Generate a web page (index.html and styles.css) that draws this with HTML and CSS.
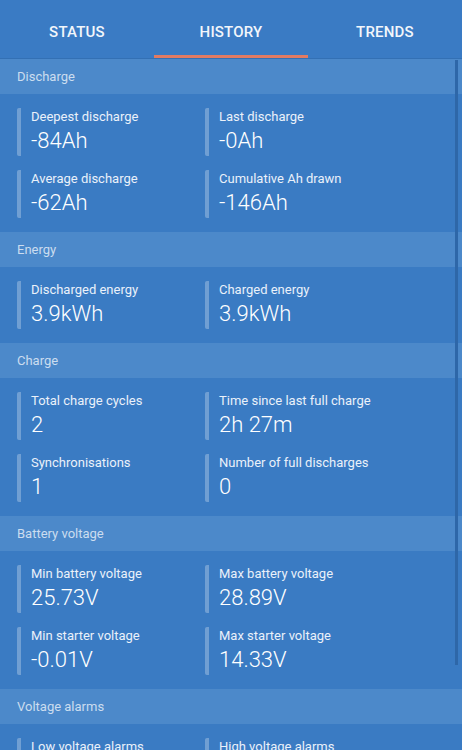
FILE: index.html
```html
<!DOCTYPE html>
<html lang="en">
<head>
  <meta charset="UTF-8" />
  <meta name="viewport" content="width=462, initial-scale=1.0"/>
  <title>History</title>
  <link rel="stylesheet" href="styles.css">
</head>
<body>

  <nav class="tabs">
    <div class="tab">STATUS</div>
    <div class="tab active">HISTORY</div>
    <div class="tab">TRENDS</div>
  </nav>

  <main class="history">

    <div class="section-title">Discharge</div>
    <div class="grid">
      <div class="item"><div class="label">Deepest discharge</div><div class="value">-84Ah</div></div>
      <div class="item"><div class="label">Last discharge</div><div class="value">-0Ah</div></div>
      <div class="item"><div class="label">Average discharge</div><div class="value">-62Ah</div></div>
      <div class="item"><div class="label">Cumulative Ah drawn</div><div class="value">-146Ah</div></div>
    </div>

    <div class="section-title">Energy</div>
    <div class="grid">
      <div class="item"><div class="label">Discharged energy</div><div class="value">3.9kWh</div></div>
      <div class="item"><div class="label">Charged energy</div><div class="value">3.9kWh</div></div>
    </div>

    <div class="section-title">Charge</div>
    <div class="grid">
      <div class="item"><div class="label">Total charge cycles</div><div class="value">2</div></div>
      <div class="item"><div class="label">Time since last full charge</div><div class="value">2h 27m</div></div>
      <div class="item"><div class="label">Synchronisations</div><div class="value">1</div></div>
      <div class="item"><div class="label">Number of full discharges</div><div class="value">0</div></div>
    </div>

    <div class="section-title">Battery voltage</div>
    <div class="grid">
      <div class="item"><div class="label">Min battery voltage</div><div class="value">25.73V</div></div>
      <div class="item"><div class="label">Max battery voltage</div><div class="value">28.89V</div></div>
      <div class="item"><div class="label">Min starter voltage</div><div class="value">-0.01V</div></div>
      <div class="item"><div class="label">Max starter voltage</div><div class="value">14.33V</div></div>
    </div>

    <div class="section-title">Voltage alarms</div>
    <div class="grid">
      <div class="item"><div class="label">Low voltage alarms</div><div class="value">0</div></div>
      <div class="item"><div class="label">High voltage alarms</div><div class="value">0</div></div>
    </div>

  </main>

  <div class="scrollbar"></div>

</body>
</html>
```

FILE: styles.css
```css
body {
  margin: 0;
  font-family: Roboto, "Liberation Sans", sans-serif;
  background: #3a7bc3;
  color: #fff;
  overflow: hidden;
  height: 750px;
  position: relative;
}

.tabs {
  display: grid;
  grid-template-columns: repeat(3, 1fr);
  height: 58px;
  background: #3a7bc4;
  border-bottom: 1px solid #3370b4;
}

.tab {
  position: relative;
  display: flex;
  align-items: center;
  justify-content: center;
  padding-top: 6px;
  font-size: 15px;
  font-weight: 500;
  letter-spacing: 0.2px;
  color: #f2f6fb;
}

.tab.active::after {
  content: "";
  position: absolute;
  left: 0;
  right: 0;
  bottom: 0;
  height: 3px;
  background: #e27b63;
}

.section-title {
  height: 35px;
  line-height: 35px;
  padding-left: 17px;
  font-size: 13px;
  color: rgba(255, 255, 255, 0.72);
  background: #4c89ca;
}

.grid {
  display: grid;
  grid-template-columns: 188px 188px;
  row-gap: 14px;
  padding: 14px 17px;
}

.item {
  border-left: 4px solid rgba(255, 255, 255, 0.28);
  border-radius: 2px;
  padding-left: 10px;
  height: 48px;
}

.label {
  font-size: 13px;
  line-height: 17px;
  color: #eaf1fa;
}

.value {
  font-size: 22px;
  font-weight: 300;
  line-height: 31px;
  color: #fff;
}

/* scroll indicator on the right edge */
.scrollbar {
  position: absolute;
  top: 60px;
  right: 4px;
  width: 3px;
  height: 605px;
  background: #2e67a8;
}
```
